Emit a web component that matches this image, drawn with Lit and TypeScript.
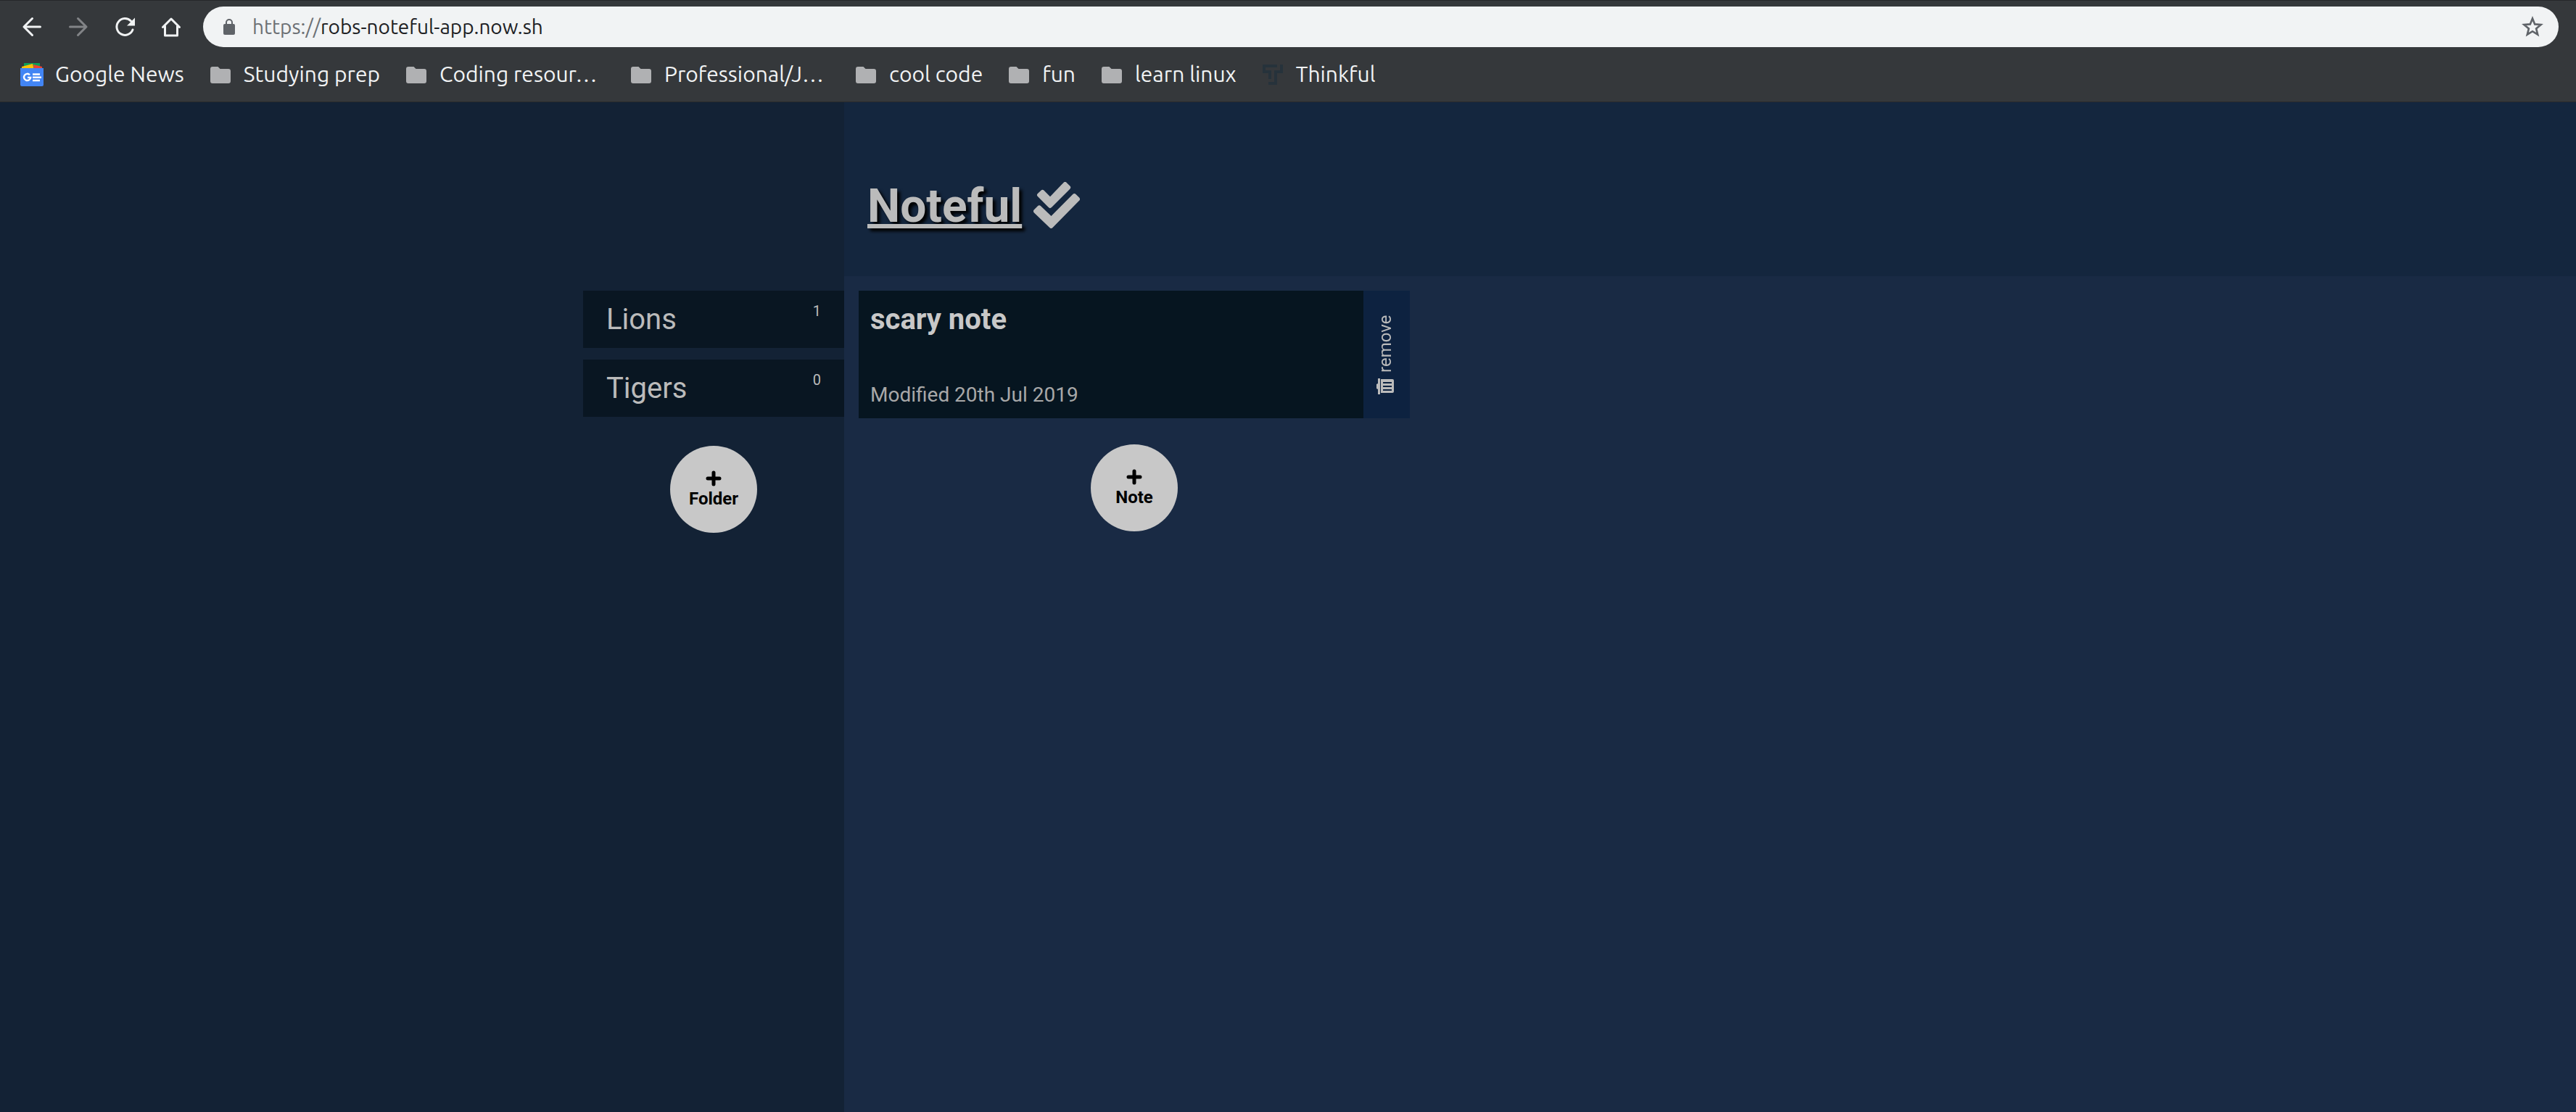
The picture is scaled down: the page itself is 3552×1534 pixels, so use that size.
import { LitElement, html, css, svg } from "lit";
import { customElement } from "lit/decorators.js";

type Bookmark = { label: string; icon: "news" | "folder" | "thinkful" };

const BOOKMARKS: Bookmark[] = [
  { label: "Google News", icon: "news" },
  { label: "Studying prep", icon: "folder" },
  { label: "Coding resour…", icon: "folder" },
  { label: "Professional/J…", icon: "folder" },
  { label: "cool code", icon: "folder" },
  { label: "fun", icon: "folder" },
  { label: "learn linux", icon: "folder" },
  { label: "Thinkful", icon: "thinkful" },
];

const FOLDERS = [
  { name: "Lions", count: 1 },
  { name: "Tigers", count: 0 },
];

const bookmarkIcons = {
  news: html`<svg class="icon" viewBox="0 0 32 32" aria-hidden="true">
    <path fill="#0c9d58" d="M5 0h22v12H5z" />
    <path fill="#ffc107" d="M2 5l15-4 2 9H2z" />
    <path fill="#ea4335" d="M18 2l12 3v5H19z" />
    <path fill="#4285f4" d="M0 7h32v23a2 2 0 0 1-2 2H2a2 2 0 0 1-2-2z" />
    <path fill="none" stroke="#fff" stroke-width="2.4" d="M13 16.3a4.6 4.6 0 1 0 1.2 3.6H10" />
    <path stroke="#fff" stroke-width="2.4" d="M17 15.5h10M17 19.8h12M17 24h10" />
  </svg>`,
  folder: html`<svg class="icon" viewBox="0 0 32 32" aria-hidden="true">
    <path fill="#b0b1b3" d="M2 8a3 3 0 0 1 3-3h7.500l3 3H27a3 3 0 0 1 3 3v14a3 3 0 0 1-3 3H5a3 3 0 0 1-3-3z" />
  </svg>`,
  thinkful: html`<svg class="icon" viewBox="0 0 32 32" aria-hidden="true">
    <path fill="none" stroke="#26323b" stroke-width="4" d="M22 4H4v8h8v10M28 2v10h-8v16h-10" />
  </svg>`,
};

@customElement("browser-bar")
export class BrowserBar extends LitElement {
  static styles = css`
    :host {
      display: block;
      box-sizing: border-box;
      height: 141px;
      background: #35383b;
      border-top: 1px solid #26282b;
      border-bottom: 1px solid #2a2b2c;
      font-family: Ubuntu, "Noto Sans", "Open Sans", sans-serif;
    }
    .toolbar {
      display: flex;
      align-items: center;
      padding: 8px 24px 0 12px;
    }
    .tool {
      display: flex;
      align-items: center;
      justify-content: center;
      width: 64px;
      height: 56px;
      padding: 0;
      border: 0;
      background: none;
      color: #f1f3f4;
    }
    .tool:disabled {
      color: #828487;
    }
    .tool svg {
      width: 32px;
      height: 32px;
    }
    .address {
      display: flex;
      flex: 1;
      align-items: center;
      box-sizing: border-box;
      height: 56px;
      margin-left: 12px;
      padding: 0 20px 0 24px;
      border-radius: 28px;
      background: #f1f3f4;
    }
    .lock {
      width: 24px;
      height: 28px;
      flex: none;
    }
    .url {
      flex: 1;
      margin-left: 20px;
      font-size: 28px;
      line-height: 40px;
      color: #202124;
      text-decoration: none;
    }
    .scheme {
      color: #6c7074;
    }
    .star {
      display: flex;
      padding: 0;
      border: 0;
      background: none;
    }
    .star svg {
      width: 32px;
      height: 32px;
    }
    .bookmarks {
      display: flex;
      gap: 34px;
      padding: 17px 28px 0;
    }
    .bookmark {
      display: flex;
      align-items: center;
      gap: 16px;
      color: #f1f3f4;
      font-size: 30px;
      line-height: 40px;
      text-decoration: none;
      white-space: nowrap;
    }
    .label {
      padding-bottom: 2px;
    }
    .label.clipped {
      width: 228px;
    }
    .icon {
      width: 32px;
      height: 32px;
      flex: none;
    }
  `;

  render() {
    const stroke = (d: string) => html`<svg viewBox="0 0 32 32" fill="none" stroke="currentColor" stroke-width="3" stroke-linecap="round" stroke-linejoin="round" aria-hidden="true">
      ${svg`<path d=${d} />`}
    </svg>`;
    return html`
      <div class="toolbar">
        <button class="tool" aria-label="Back">${stroke("M27.500 16H5M16.500 4.500L5 16l11.500 11.500")}</button>
        <button class="tool" aria-label="Forward" disabled>${stroke("M4.500 16H27M15.500 4.500L27 16 15.500 27.500")}</button>
        <button class="tool" aria-label="Reload">
          <svg viewBox="0 0 32 32" aria-hidden="true">
            <path fill="none" stroke="currentColor" stroke-width="3" stroke-linecap="round" d="M24.500 8A11.400 11.400 0 1 0 27 20" />
            <path fill="currentColor" d="M30 3.500v11H19z" />
          </svg>
        </button>
        <button class="tool" aria-label="Home">${stroke("M4.500 16.500L16 5l11.500 11.500M7.500 15V28h17V15")}</button>
        <div class="address">
          <svg class="lock" viewBox="0 0 24 28" aria-hidden="true">
            <rect x="4" y="10" width="16" height="15" rx="2" fill="#5f6368" />
            <path d="M8 11V8a4 4 0 0 1 8 0v3" fill="none" stroke="#5f6368" stroke-width="2" />
          </svg>
          <a class="url" href="https://robs-noteful-app.now.sh"><span class="scheme">https://</span>robs-noteful-app.now.sh</a>
          <button class="star" aria-label="Bookmark this page">
            <svg viewBox="0 0 32 32" aria-hidden="true">
              <path fill="none" stroke="#5f6368" stroke-width="2.600" d="M16 4.500l3.200 7.900 8.400.6-6.500 5.400 2.100 8.300L16 22.200l-7.200 4.500 2.100-8.300L4.400 13l8.400-.6z" />
            </svg>
          </button>
        </div>
      </div>
      <nav class="bookmarks" aria-label="Bookmarks">
        ${BOOKMARKS.map(
          (b) => html`<a class="bookmark" href="#"
            >${bookmarkIcons[b.icon]}<span class=${b.label.endsWith("…") ? "label clipped" : "label"}>${b.label}</span></a
          >`,
        )}
      </nav>
    `;
  }
}

@customElement("add-button")
export class AddButton extends LitElement {
  static styles = css`
    :host {
      display: block;
    }
    .add {
      display: flex;
      flex-direction: column;
      align-items: center;
      justify-content: center;
      width: 120px;
      height: 120px;
      padding: 0 0 2px;
      border: 0;
      border-radius: 50%;
      background: #c8c8c8;
      color: #000;
      font: 700 24px/28px Roboto, sans-serif;
    }
    .plus {
      width: 22px;
      height: 28px;
    }
  `;

  render() {
    return html`<button class="add">
      <svg class="plus" viewBox="0 0 22 28" aria-hidden="true">
        <path stroke="#000" stroke-width="5" stroke-linecap="round" d="M3 14h16M11 6v16" />
      </svg>
      <slot></slot>
    </button>`;
  }
}

@customElement("app-root")
export class AppRoot extends LitElement {
  static styles = css`
    :host {
      display: flex;
      flex-direction: column;
      min-height: 100vh;
      background: #192a44;
      font-family: Roboto, sans-serif;
    }
    .page {
      display: grid;
      flex: 1;
      grid-template-columns: 1164px 1fr;
      grid-template-rows: 240px 1fr;
    }
    .sidebar {
      display: flex;
      flex-direction: column;
      grid-row: 1 / 3;
      align-items: flex-end;
      padding-top: 260px;
      background: #132235;
    }
    .panel {
      display: flex;
      flex-direction: column;
      align-items: center;
      width: 360px;
    }
    .folders {
      display: flex;
      flex-direction: column;
      gap: 16px;
      width: 100%;
      margin: 0 0 40px;
      padding: 0;
      list-style: none;
    }
    .folder {
      display: flex;
      justify-content: space-between;
      box-sizing: border-box;
      height: 79px;
      padding: 16px 32px 15px;
      background: #091622;
      color: #bbb;
      font-size: 40px;
      line-height: 48px;
      text-decoration: none;
    }
    .count {
      font-size: 20px;
      line-height: 24px;
    }
    .header {
      display: flex;
      align-items: center;
      gap: 16px;
      padding: 48px 32px 0;
      background: #14263e;
    }
    .title {
      margin: 0;
      font-size: 64px;
      line-height: 76px;
    }
    .home {
      color: #bbb;
      text-shadow: 4px 4px 4px #000;
      text-decoration-thickness: 6px;
    }
    .checks {
      width: 64px;
      height: 64px;
      margin-bottom: 4px;
    }
    .notes {
      display: flex;
      flex-direction: column;
      align-items: center;
      width: 760px;
      padding: 20px;
    }
    .note {
      display: flex;
      width: 100%;
      height: 176px;
      margin-bottom: 36px;
      background: #061520;
    }
    .body {
      display: flex;
      flex: 1;
      flex-direction: column;
      justify-content: space-between;
      padding: 16px 16px 15px;
    }
    .name {
      margin: 0;
      color: #c8c8c8;
      font-size: 40px;
      line-height: 48px;
    }
    .name a {
      color: inherit;
      text-decoration: none;
    }
    .modified {
      margin: 0;
      color: #a8a8a8;
      font-size: 28px;
      line-height: 34px;
    }
    .remove {
      display: flex;
      align-items: center;
      justify-content: center;
      gap: 8px;
      width: 64px;
      padding: 0 0 0 4px;
      border: 0;
      background: #0d2240;
      color: #bbb;
      font: 24px/28px Roboto, sans-serif;
      writing-mode: vertical-rl;
      transform: rotate(180deg);
    }
    .trash {
      width: 24px;
      height: 22px;
      transform: rotate(180deg);
    }
  `;

  render() {
    return html`
      <browser-bar></browser-bar>
      <div class="page">
        <aside class="sidebar">
          <div class="panel">
            <ul class="folders">
              ${FOLDERS.map(
                (f) => html`<li>
                  <a class="folder" href="#"><span>${f.name}</span><span class="count">${f.count}</span></a>
                </li>`,
              )}
            </ul>
            <add-button>Folder</add-button>
          </div>
        </aside>
        <header class="header">
          <h1 class="title"><a class="home" href="#">Noteful</a></h1>
          <svg class="checks" viewBox="0 0 64 64" aria-hidden="true">
            <path fill="#bbb" d="M5.900 20.100a3 3 0 0 1 0-4.200l4.500-4.200a3 3 0 0 1 4.200 0L23 20.200 41.500.9a3 3 0 0 1 4.200 0l4.600 4.600a3 3 0 0 1 0 4.200L25 35.100a3 3 0 0 1-4.200 0z" />
            <path fill="#bbb" d="M.9 42.400a3 3 0 0 1 0-4.200l5-5a3 3 0 0 1 4.200 0L24.500 47 54.300 17a3 3 0 0 1 4.200 0l4.600 4.600a3 3 0 0 1 0 4.200L26.500 63a3 3 0 0 1-4.200 0z" />
          </svg>
        </header>
        <main class="notes">
          <article class="note">
            <div class="body">
              <h2 class="name"><a href="#">scary note</a></h2>
              <p class="modified">Modified 20th Jul 2019</p>
            </div>
            <button class="remove">
              <svg class="trash" viewBox="0 0 24 22" aria-hidden="true">
                <path fill="#bbb" d="M0 8l2-1V0h3v22H2v-7l-2-1zM6 1h16a2 2 0 0 1 2 2v15a2 2 0 0 1-2 2H6z" />
                <path stroke="#0d2240" stroke-width="2" d="M9 6h12M9 11h12M9 16h12" />
              </svg>
              <span>remove</span>
            </button>
          </article>
          <add-button>Note</add-button>
        </main>
      </div>
    `;
  }
}
